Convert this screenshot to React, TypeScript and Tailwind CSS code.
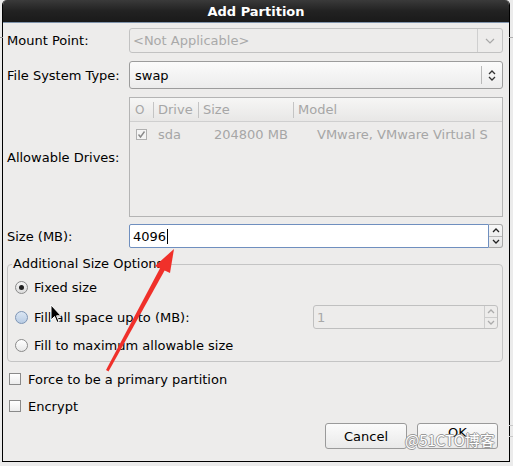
import React from "react";

function ChevDown({ className = "" }: { className?: string }) {
  return (
    <svg width="10" height="6" viewBox="0 0 10 6" className={className}>
      <path d="M1 1 L5 5 L9 1" fill="none" stroke="currentColor" strokeWidth="1.2" />
    </svg>
  );
}
function ChevUp({ className = "" }: { className?: string }) {
  return (
    <svg width="8" height="5" viewBox="0 0 8 5" className={className}>
      <path d="M1 4 L4 1 L7 4" fill="none" stroke="currentColor" strokeWidth="1.3" />
    </svg>
  );
}
function ChevDn({ className = "" }: { className?: string }) {
  return (
    <svg width="8" height="5" viewBox="0 0 8 5" className={className}>
      <path d="M1 1 L4 4 L7 1" fill="none" stroke="currentColor" strokeWidth="1.3" />
    </svg>
  );
}

function Radio({ state }: { state: "on" | "hover" | "off" }) {
  if (state === "on")
    return (
      <span className="w-[13px] h-[13px] rounded-full border border-[#8a8a8a] bg-gradient-to-b from-[#f4f4f4] to-[#dcdcdc] flex items-center justify-center shrink-0">
        <span className="w-[5px] h-[5px] rounded-full bg-[#202020]" />
      </span>
    );
  if (state === "hover")
    return (
      <span className="w-[13px] h-[13px] rounded-full border border-[#7d95b5] bg-gradient-to-b from-[#dbe6f3] to-[#b8cce4] shrink-0" />
    );
  return (
    <span className="w-[13px] h-[13px] rounded-full border border-[#8a8a8a] bg-gradient-to-b from-[#ffffff] to-[#e8e8e8] shrink-0" />
  );
}

export default function App() {
  return (
    <div className="relative w-[513px] h-[466px] bg-[#ebebeb] overflow-hidden font-['DejaVu_Sans',sans-serif]">
      {/* background lines outside window */}
      <div className="absolute left-0 top-[37px] w-[3px] h-px bg-[#9a9a9a]" />
      <div className="absolute right-0 top-[37px] w-[4px] h-px bg-[#b0b0b0]" />
      <div className="absolute right-0 top-[425px] w-[4px] h-[12px] border-y border-[#c8c8c8]" />

      <div className="ml-[2px] w-[508px] h-[462px] flex flex-col bg-[#edeceb] border-x border-b border-black rounded-t-[5px] overflow-hidden">
        <div className="h-[23px] shrink-0 bg-gradient-to-b from-[#3a3a3a] via-[#222222] to-[#1a1a1a] border-b border-[#7f93ab] flex items-center justify-center text-white font-bold text-[13px] leading-none">
          Add Partition
        </div>

        <div className="flex flex-col pl-[4px] pr-[6px] pt-[5px] text-[13px] text-black leading-none">
          {/* Mount point */}
          <div className="h-[25px] flex items-center">
            <span className="w-[122px] shrink-0">Mount Point:</span>
            <div className="flex-1 h-full flex items-center border border-[#c2c2c2] rounded-[3px] bg-[#edeceb]">
              <span className="flex-1 pl-[3px] text-[#a9a9a9]">&lt;Not Applicable&gt;</span>
              <div className="w-[25px] h-full border-l border-[#cfcfcf] flex items-center justify-center text-[#a8a8a8]">
                <ChevDown />
              </div>
            </div>
          </div>

          {/* File system */}
          <div className="mt-[8px] h-[28px] flex items-center">
            <span className="w-[122px] shrink-0">File System Type:</span>
            <div className="flex-1 h-full flex items-center border border-[#9c9c9c] rounded-[3px] bg-gradient-to-b from-[#fbfbfb] to-[#ececec]">
              <span className="flex-1 pl-[5px]">swap</span>
              <div className="h-[18px] border-l border-[#b9b9b9]" />
              <div className="w-[20px] flex flex-col items-center gap-[1px] text-[#333]">
                <ChevUp />
                <ChevDn />
              </div>
            </div>
          </div>

          {/* Drives */}
          <div className="mt-[8px] h-[120px] flex items-center">
            <span className="w-[122px] shrink-0">Allowable Drives:</span>
            <div className="flex-1 h-full flex flex-col border border-[#b4b4b4] bg-[#edeceb] text-[#a6a6a6]">
              <div className="h-[24px] flex items-center border-b border-[#cfcfcf] bg-gradient-to-b from-[#f6f6f5] to-[#e8e7e6]">
                <span className="w-[23px] pl-[5px] text-[12px]">O</span>
                <span className="w-px h-[16px] bg-[#c4c4c4]" />
                <span className="w-[44px] pl-[4px]">Drive</span>
                <span className="w-px h-[16px] bg-[#c4c4c4]" />
                <span className="w-[94px] pl-[4px]">Size</span>
                <span className="w-px h-[16px] bg-[#c4c4c4]" />
                <span className="pl-[4px]">Model</span>
              </div>
              <div className="mt-[5px] h-[15px] flex items-center whitespace-nowrap overflow-hidden">
                <span className="ml-[6px] w-[11px] h-[11px] border border-[#b0b0b0] bg-[#f4f4f4] flex items-center justify-center shrink-0">
                  <svg width="9" height="9" viewBox="0 0 9 9">
                    <path d="M1.5 4.5 L3.5 7 L7.5 1.5" fill="none" stroke="#8a8a8a" strokeWidth="1.4" />
                  </svg>
                </span>
                <span className="ml-[11px] w-[56px] shrink-0">sda</span>
                <span className="w-[79px] shrink-0">204800 MB</span>
                <span className="ml-[24px] shrink-0">VMware, VMware Virtual S</span>
              </div>
            </div>
          </div>

          {/* Size */}
          <div className="mt-[7px] h-[24px] flex items-center">
            <span className="w-[122px] shrink-0">Size (MB):</span>
            <div className="flex-1 h-full flex items-center border border-[#6f8fbf] rounded-l-[2px] bg-white">
              <span className="pl-[3px]">4096</span>
              <span className="ml-[1px] w-px h-[15px] bg-black" />
            </div>
            <div className="w-[14px] h-full flex flex-col border border-l-0 border-[#a8a8a8] rounded-r-[3px] bg-gradient-to-b from-[#f8f8f8] to-[#e6e6e6] text-[#222]">
              <div className="flex-1 flex items-center justify-center border-b border-[#b8b8b8]">
                <ChevUp />
              </div>
              <div className="flex-1 flex items-center justify-center">
                <ChevDn />
              </div>
            </div>
          </div>

          {/* Additional size options frame */}
          <div className="relative mt-[16px] h-[98px] border border-[#c4c4c4] rounded-[4px] pt-[10px] pr-[4px]">
            <span className="absolute left-[4px] top-[-9px] px-[1px] bg-[#edeceb] text-[13px] leading-[16px]">
              Additional Size Options
            </span>
            <div className="h-[24px] flex items-center pl-[7px]">
              <Radio state="on" />
              <span className="ml-[6px]">Fixed size</span>
            </div>
            <div className="mt-[3px] h-[30px] flex items-center pl-[7px]">
              <Radio state="hover" />
              <span className="ml-[6px]">Fill all space up to (MB):</span>
              <div className="flex-1" />
              <div className="w-[185px] h-[24px] flex border border-[#c0c0c0] rounded-[3px] bg-[#edeceb]">
                <span className="flex-1 flex items-center pl-[3px] text-[#a8a8a8]">1</span>
                <div className="w-[13px] flex flex-col border-l border-[#cdcdcd] text-[#ababab]">
                  <div className="flex-1 flex items-center justify-center border-b border-[#cdcdcd]">
                    <ChevUp />
                  </div>
                  <div className="flex-1 flex items-center justify-center">
                    <ChevDn />
                  </div>
                </div>
              </div>
            </div>
            <div className="mt-[1px] h-[24px] flex items-center pl-[7px]">
              <Radio state="off" />
              <span className="ml-[6px]">Fill to maximum allowable size</span>
            </div>
          </div>

          {/* Checkboxes */}
          <div className="mt-[7px] h-[20px] flex items-center">
            <span className="ml-[2px] w-[12px] h-[12px] border border-[#8a8a8a] bg-gradient-to-b from-white to-[#ececec] shrink-0" />
            <span className="ml-[7px]">Force to be a primary partition</span>
          </div>
          <div className="mt-[7px] h-[20px] flex items-center">
            <span className="ml-[2px] w-[12px] h-[12px] border border-[#8a8a8a] bg-gradient-to-b from-white to-[#ececec] shrink-0" />
            <span className="ml-[7px]">Encrypt</span>
          </div>

          {/* Buttons */}
          <div className="mt-[7px] h-[26px] flex justify-end gap-[10px] mr-[5px]">
            <button className="w-[82px] h-full border border-[#9a9a9a] rounded-[3px] bg-gradient-to-b from-[#fbfbfb] to-[#e9e9e9] text-[13px] text-black">
              Cancel
            </button>
            <button className="w-[81px] h-full border border-[#9a9a9a] rounded-[3px] bg-gradient-to-b from-[#fbfbfb] to-[#e9e9e9] text-[13px] text-black pb-[7px]">
              OK
            </button>
          </div>
        </div>
      </div>

      {/* Watermark */}
      <span className="absolute left-[405px] top-[432px] text-[15px] leading-[16px] text-white font-['Noto_Sans_CJK_SC',sans-serif] [text-shadow:1px_0_0_#9a9a9a,-1px_0_0_#9a9a9a,0_1px_0_#9a9a9a,0_-1px_0_#9a9a9a]">
        @51CTO博客
      </span>

      {/* Red arrow */}
      <svg className="absolute left-0 top-0 pointer-events-none" width="513" height="466" viewBox="0 0 513 466">
        <polygon points="106,370 108.5,371.5 166,268 161.5,265.5" fill="#f0302a" />
        <polygon points="174,249 155,266 170,273" fill="#f0302a" />
      </svg>

      {/* Mouse cursor */}
      <svg className="absolute left-[50px] top-[304px] pointer-events-none" width="14" height="22" viewBox="0 0 14 22">
        <path d="M1 1 L1 16 L4.5 12.5 L7 18.5 L9 17.6 L6.6 11.8 L11 11.8 Z" fill="#000" stroke="#fff" strokeWidth="1" />
      </svg>
    </div>
  );
}
